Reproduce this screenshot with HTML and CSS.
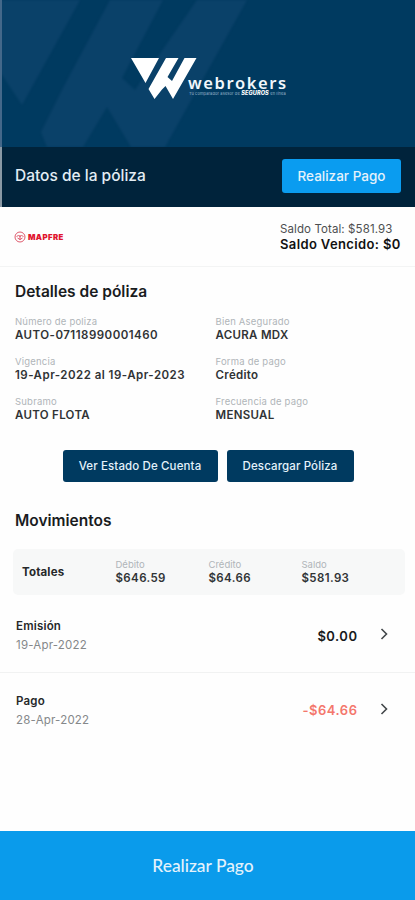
FILE: index.html
```html
<!DOCTYPE html>
<html lang="es">
<head>
<meta charset="utf-8">
<meta name="viewport" content="width=device-width, initial-scale=1">
<title>Datos de la póliza</title>
<link rel="stylesheet" href="styles.css">
</head>
<body>
<div class="app">
  <header class="hero">
    <svg class="hero-art" viewBox="0 0 415 147" width="415" height="147" aria-hidden="true">
      <path d="M0 0H80L22 105L0 72ZM110 0H163L122 78L135 90L197 0H247L165 147H131L107 107L83 147H47L41 132L64 86Z"/>
    </svg>
    <div class="brand">
      <svg class="brand-mark" viewBox="0 0 66 42" width="66" height="42" aria-hidden="true">
        <path d="M0 0H28L14.500 25ZM35 0H47.500L36.500 19L41 23L53.500 0H65.500L42 41L34.500 28L31 31.500L23.500 41L17.500 31Z"/>
      </svg>
      <div class="brand-text">
        <span class="brand-name">webrokers</span>
        <span class="brand-tag"><span>Tu comparador asesor de</span><b>SEGUROS</b><span>en línea</span></span>
      </div>
    </div>
  </header>
  <div class="titlebar">
    <h1>Datos de la póliza</h1>
    <button class="pay">Realizar Pago</button>
  </div>
  <section class="insurer">
    <div class="mapfre">
      <svg viewBox="0 0 12 12" width="12" height="12" aria-hidden="true">
        <circle cx="6" cy="6" r="5"/>
        <path d="M2.500 5.500Q4.500 3.500 6 5.500Q7.500 3.500 9.500 5.500M3.500 7L6 8.500L8.500 7M6 4V9"/>
      </svg>
      <span>MAPFRE</span>
    </div>
    <div class="balance">
      <div class="total">Saldo Total: $581.93</div>
      <div class="due">Saldo Vencido: $0</div>
    </div>
  </section>
  <section class="details">
    <h2>Detalles de póliza</h2>
    <dl>
      <div><dt>Número de poliza</dt><dd class="wide">AUTO-07118990001460</dd></div>
      <div><dt>Bien Asegurado</dt><dd>ACURA MDX</dd></div>
      <div><dt>Vigencia</dt><dd class="wide">19-Apr-2022 al 19-Apr-2023</dd></div>
      <div><dt>Forma de pago</dt><dd>Crédito</dd></div>
      <div><dt>Subramo</dt><dd>AUTO FLOTA</dd></div>
      <div><dt>Frecuencia de pago</dt><dd>MENSUAL</dd></div>
    </dl>
    <div class="actions">
      <button class="statement">Ver Estado De Cuenta</button>
      <button class="download">Descargar Póliza</button>
    </div>
  </section>
  <section class="moves">
    <h2>Movimientos</h2>
    <div class="totals">
      <strong>Totales</strong>
      <div><span>Débito</span><b>$646.59</b></div>
      <div><span>Crédito</span><b>$64.66</b></div>
      <div><span>Saldo</span><b>$581.93</b></div>
    </div>
    <div class="move">
      <div class="what"><b>Emisión</b><span>19-Apr-2022</span></div>
      <div class="amount">$0.00</div>
      <svg viewBox="0 0 8 12" width="8" height="12" aria-hidden="true"><path d="M1.500 1L6.500 6L1.500 11"/></svg>
    </div>
    <div class="move">
      <div class="what"><b>Pago</b><span>28-Apr-2022</span></div>
      <div class="amount negative">-$64.66</div>
      <svg viewBox="0 0 8 12" width="8" height="12" aria-hidden="true"><path d="M1.500 1L6.500 6L1.500 11"/></svg>
    </div>
  </section>
  <button class="footer-pay">Realizar Pago</button>
</div>
</body>
</html>
```
FILE: styles.css
```css
* { box-sizing: border-box; }
body { margin: 0; background: #fefefe; font-family: Inter, sans-serif; color: #26282a; }
h1, h2, dl, dd { margin: 0; }
button { border: 0; padding: 0; font-family: inherit; color: #e4f2fb; }
.app { width: 415px; height: 900px; display: flex; flex-direction: column; overflow: hidden; }

.hero { height: 147px; flex: none; position: relative; background: #003a60; border-left: 2px solid #44688a; overflow: hidden; }
.hero-art { position: absolute; top: 0; left: -2px; fill: #0a4169; filter: blur(1px); }
.brand { position: relative; display: flex; padding: 58px 0 0 129px; }
.brand-mark { fill: #fff; flex: none; }
.brand-text { margin-left: -9px; padding-top: 17px; color: #fff; white-space: nowrap; }
.brand-name { display: block; font: 600 16.500px/15px "Noto Sans", sans-serif; letter-spacing: 1.600px; color: #f2f7fb; }
.brand-tag { display: flex; align-items: center; gap: 1.500px; height: 7px; margin-left: 1px; font-size: 4px; line-height: 5px; letter-spacing: .1px; color: #9db9cd; }
.brand-tag b { font-size: 5.500px; line-height: 7px; font-style: italic; font-weight: 800; color: #fff; }

.titlebar { height: 60px; flex: none; display: flex; align-items: center; justify-content: space-between; padding: 0 14px 3px 13px; background: #00233b; border-left: 2px solid #8a99a5; }
.titlebar h1 { font-size: 15.500px; font-weight: 500; color: #e3edf4; }
.pay { width: 119px; height: 34px; border-radius: 3px; background: #0a9cf0; font-size: 13.500px; font-weight: 500; }

.insurer { height: 60px; flex: none; display: flex; align-items: center; justify-content: space-between; padding: 0 14px; border-bottom: 1px solid #f3f4f4; }
.mapfre { display: flex; align-items: center; gap: 2px; }
.mapfre svg { fill: none; stroke: #df596c; stroke-width: 1; }
.mapfre span { font-size: 7.800px; line-height: 10px; font-weight: 900; color: #e0152f; letter-spacing: .4px; }
.balance { width: 121px; white-space: nowrap; }
.total { font-size: 11.500px; line-height: 14px; letter-spacing: .1px; color: #4d4f50; }
.due { font-size: 13px; line-height: 16px; letter-spacing: .37px; font-weight: 600; color: #111; }

.details { height: 229px; flex: none; padding: 15px 15px 0; }
h2 { font-size: 15.500px; line-height: 20px; font-weight: 600; color: #1a1c1e; }
dl { display: grid; grid-template-columns: 200.500px 1fr; grid-auto-rows: 40px; margin-top: 14px; }
dt { font-size: 9.500px; line-height: 12px; color: #b0b5b9; letter-spacing: .2px; white-space: nowrap; }
dd { font-size: 11.500px; line-height: 14px; letter-spacing: .3px; font-weight: 600; color: #303335; white-space: nowrap; }
dd.wide { letter-spacing: .48px; }
.actions { display: flex; justify-content: center; gap: 9px; margin: 14px 0 0 1px; }
.actions button { height: 32px; border-radius: 3px; background: #003a60; font-size: 11.500px; font-weight: 500; letter-spacing: .12px; }
.statement { width: 155px; }
.download { width: 127px; }

.moves { flex: 1; padding-top: 15px; }
.moves h2 { padding-left: 15px; }
.totals { display: grid; grid-template-columns: 93.500px 93px 93px 1fr; align-items: center; height: 46px; margin: 18px 10px 0 13px; padding-left: 9px; border-radius: 5px; background: #f7f8f8; }
.totals strong { font-size: 11.500px; font-weight: 700; letter-spacing: .15px; }
.totals span { display: block; font-size: 9.500px; line-height: 12px; color: #b0b5b9; }
.totals b { display: block; font-size: 11.500px; line-height: 14px; letter-spacing: .38px; font-weight: 600; color: #303335; }
.move { display: flex; align-items: center; height: 74px; padding: 0 27px 0 16px; }
.move:nth-child(3) { height: 78px; padding-top: 4px; border-bottom: 1px solid #f1f2f2; }
.what { flex: 1; padding-top: 1px; }
.what b { display: block; font-size: 11.500px; line-height: 19px; letter-spacing: .2px; font-weight: 600; }
.what span { display: block; font-size: 11.500px; line-height: 19px; letter-spacing: .2px; color: #85888a; }
.amount { font-size: 13px; letter-spacing: .5px; font-weight: 600; color: #17191b; }
.negative { color: #f4776c; }
.move svg { margin: 0 0 3px 22.500px; fill: none; stroke: #43474a; stroke-width: 1.600; }

.footer-pay { height: 69px; flex: none; padding-right: 9px; background: #0a9beb; font: 500 17.400px/20px Lato, sans-serif; }
```
